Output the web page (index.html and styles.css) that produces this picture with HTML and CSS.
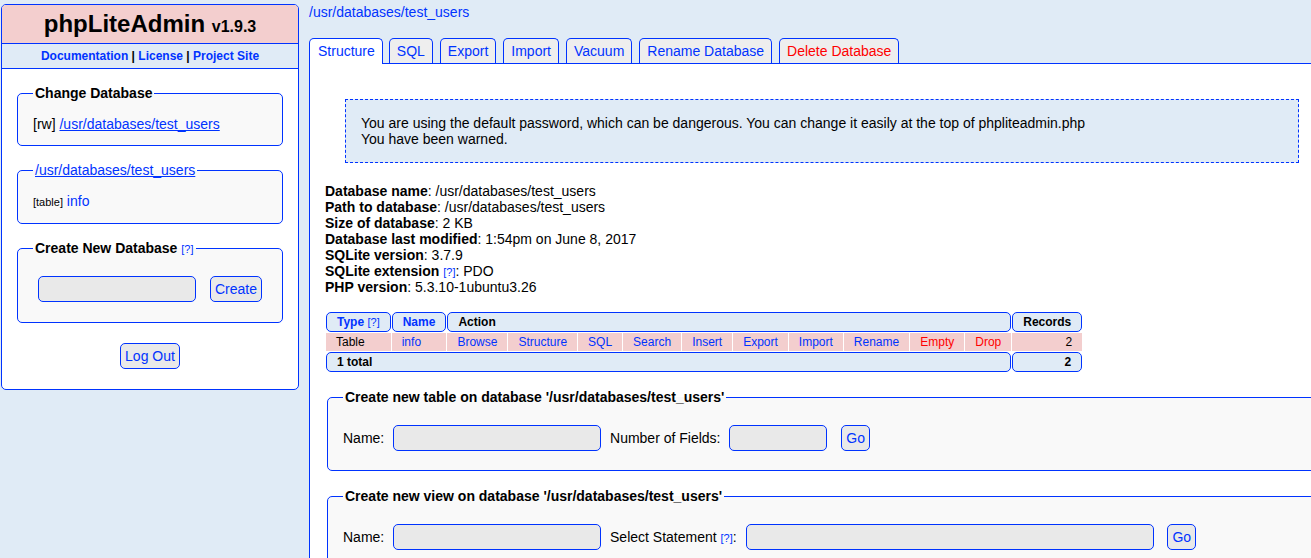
FILE: index.html
```html
<!DOCTYPE html>
<html>
<head>
<meta charset="utf-8">
<title>phpLiteAdmin</title>
<link rel="stylesheet" href="styles.css">
</head>
<body>
<div class="layout">
  <aside class="sidebar">
    <h1 class="brand">phpLiteAdmin <span class="ver">v1.9.3</span></h1>
    <div class="sidelinks"><a href="#">Documentation</a> | <a href="#">License</a> | <a href="#">Project Site</a></div>
    <div class="sidebody">
      <fieldset class="fs fs-side">
        <legend class="lg">Change Database</legend>
        <div class="line">[rw] <a class="ul" href="#">/usr/databases/test_users</a></div>
      </fieldset>
      <fieldset class="fs fs-side">
        <legend class="lg lg-link"><a class="ul" href="#">/usr/databases/test_users</a></legend>
        <div class="line"><span class="small">[table]</span> <a href="#">info</a></div>
      </fieldset>
      <fieldset class="fs fs-side fs-form">
        <legend class="lg">Create New Database <a class="help" href="#">[?]</a></legend>
        <div class="line"><input class="inp inp-db" type="text"> <button class="btn">Create</button></div>
      </fieldset>
      <div class="logout"><button class="btn">Log Out</button></div>
    </div>
  </aside>

  <div class="content">
    <div class="crumb"><a href="#">/usr/databases/test_users</a></div>
    <nav class="tabs">
      <a class="tab tab-on" href="#">Structure</a>
      <a class="tab" href="#">SQL</a>
      <a class="tab" href="#">Export</a>
      <a class="tab" href="#">Import</a>
      <a class="tab" href="#">Vacuum</a>
      <a class="tab" href="#">Rename Database</a>
      <a class="tab tab-del" href="#">Delete Database</a>
    </nav>
    <main class="main">
      <div class="confirm">You are using the default password, which can be dangerous. You can change it easily at the top of phpliteadmin.php<br>You have been warned.</div>
      <div class="info">
        <b>Database name</b>: /usr/databases/test_users<br>
        <b>Path to database</b>: /usr/databases/test_users<br>
        <b>Size of database</b>: 2 KB<br>
        <b>Database last modified</b>: 1:54pm on June 8, 2017<br>
        <b>SQLite version</b>: 3.7.9<br>
        <b>SQLite extension</b> <a class="help" href="#">[?]</a>: PDO<br>
        <b>PHP version</b>: 5.3.10-1ubuntu3.26
      </div>
      <table class="tbl">
        <tr>
          <td class="th"><a href="#">Type</a> <a class="help" href="#">[?]</a></td>
          <td class="th"><a href="#">Name</a></td>
          <td class="th" colspan="10">Action</td>
          <td class="th">Records</td>
        </tr>
        <tr>
          <td class="td">Table</td>
          <td class="td"><a href="#">info</a></td>
          <td class="td"><a href="#">Browse</a></td>
          <td class="td"><a href="#">Structure</a></td>
          <td class="td"><a href="#">SQL</a></td>
          <td class="td"><a href="#">Search</a></td>
          <td class="td"><a href="#">Insert</a></td>
          <td class="td"><a href="#">Export</a></td>
          <td class="td"><a href="#">Import</a></td>
          <td class="td"><a href="#">Rename</a></td>
          <td class="td"><a class="red" href="#">Empty</a></td>
          <td class="td"><a class="red" href="#">Drop</a></td>
          <td class="td num">2</td>
        </tr>
        <tr>
          <td class="th" colspan="12">1 total</td>
          <td class="th num">2</td>
        </tr>
      </table>
      <fieldset class="fs fs-main">
        <legend class="lg">Create new table on database '/usr/databases/test_users'</legend>
        <div class="line">Name: <input class="inp inp-name" type="text"> Number of Fields: <input class="inp inp-num" type="text"> <button class="btn">Go</button></div>
      </fieldset>
      <fieldset class="fs fs-main">
        <legend class="lg">Create new view on database '/usr/databases/test_users'</legend>
        <div class="line">Name: <input class="inp inp-name" type="text"> Select Statement <a class="help" href="#">[?]</a>: <input class="inp inp-sel" type="text"> <button class="btn">Go</button></div>
      </fieldset>
    </main>
  </div>
</div>
</body>
</html>
```

FILE: styles.css
```css
html, body {
  margin: 0;
  padding: 0;
  overflow: hidden;
}
body {
  font-family: "Liberation Sans", Arial, sans-serif;
  font-size: 14px;
  line-height: 16px;
  color: #000;
  background: #e0ebf6;
}
a {
  color: #03f;
  text-decoration: none;
}
a.ul {
  text-decoration: underline;
}
a.red, .tab-del {
  color: #f00;
}
.layout {
  display: flex;
  align-items: flex-start;
  gap: 10px;
  padding: 4px 0 0 1px;
  width: 1400px;
}
.sidebar {
  flex: 0 0 298px;
  box-sizing: border-box;
  border: 1px solid #03f;
  border-radius: 5px;
  background: #fff;
  overflow: hidden;
}
.brand {
  margin: 0;
  padding: 5px;
  height: 28px;
  font-size: 24px;
  line-height: 28px;
  font-weight: bold;
  text-align: center;
  background: #f3cece;
  border-bottom: 1px solid #03f;
}
.ver {
  font-size: 16px;
  line-height: 16px;
}
.sidelinks {
  padding: 5px;
  height: 14px;
  text-align: center;
  font-size: 12px;
  line-height: 14px;
  font-weight: bold;
  background: #e0ebf6;
  border-bottom: 1px solid #03f;
}
.sidebody {
  padding: 16px 13px 15px;
}
.fs {
  margin: 0 2px 16px;
  padding: 15px 15px 14px;
  border: 1px solid #03f;
  border-radius: 5px;
  background: #f9f9f9;
}
.fs-side {
  padding-bottom: 13px;
}
.fs-side.fs-form {
  padding-bottom: 15px;
  margin-bottom: 15px;
}
.lg {
  padding: 0 2px;
  font-weight: bold;
  line-height: 16px;
}
.lg-link {
  font-weight: normal;
}
.line {
  line-height: 16px;
}
.small {
  font-size: 11px;
}
.help {
  font-size: 11px;
  font-weight: normal;
  line-height: 1;
}
.inp {
  box-sizing: border-box;
  height: 26px;
  margin: 5px;
  padding: 0 5px;
  border: 1px solid #03f;
  border-radius: 5px;
  background: #e9e9e9;
  font-family: "Liberation Sans", Arial, sans-serif;
  font-size: 14px;
  vertical-align: baseline;
}
.inp-db { width: 158px; }
.inp-name { width: 208px; }
.inp-num { width: 98px; }
.inp-sel { width: 408px; }
.btn {
  box-sizing: border-box;
  height: 26px;
  margin: 5px;
  padding: 0 4px;
  border: 1px solid #03f;
  border-radius: 5px;
  background: #e9e9e9;
  color: #03f;
  font-family: "Liberation Sans", Arial, sans-serif;
  font-size: 14px;
}
.logout {
  text-align: center;
}
.content {
  flex: 0 0 1025px;
}
.crumb {
  line-height: 16px;
}
.tabs {
  display: flex;
  align-items: flex-end;
  gap: 7px;
  margin-top: 18px;
}
.tab {
  display: block;
  padding: 4px 7px;
  line-height: 16px;
  border: 1px solid #03f;
  border-bottom: 0;
  border-radius: 5px 5px 0 0;
  background: #eee;
}
.tab-on {
  background: #fff;
  padding: 4px 7px 5px 8px;
  margin-right: -1px;
  margin-bottom: -1px;
  position: relative;
  z-index: 1;
}
.main {
  box-sizing: border-box;
  min-height: 600px;
  padding: 15px;
  border-top: 1px solid #03f;
  border-left: 1px solid #03f;
  background: #fff;
}
.confirm {
  margin: 20px 20px 20px 20px;
  padding: 15px;
  border: 1px dashed #03f;
  background: #e0ebf6;
  line-height: 16px;
}
.info {
  line-height: 16px;
}
.tbl {
  margin: 16px 0 16px;
  border-spacing: 1px;
  font-size: 12px;
  line-height: 14px;
}
.tbl td {
  padding: 2px 10px;
  white-space: nowrap;
  text-align: left;
}
.tbl .th {
  border: 1px solid #03f;
  border-radius: 5px;
  background: #e0ebf6;
  font-weight: bold;
}
.tbl .td {
  background: #f3cece;
}
.tbl .num {
  text-align: right;
}
.fs-main {
  margin: 0 2px 17px;
}
```
